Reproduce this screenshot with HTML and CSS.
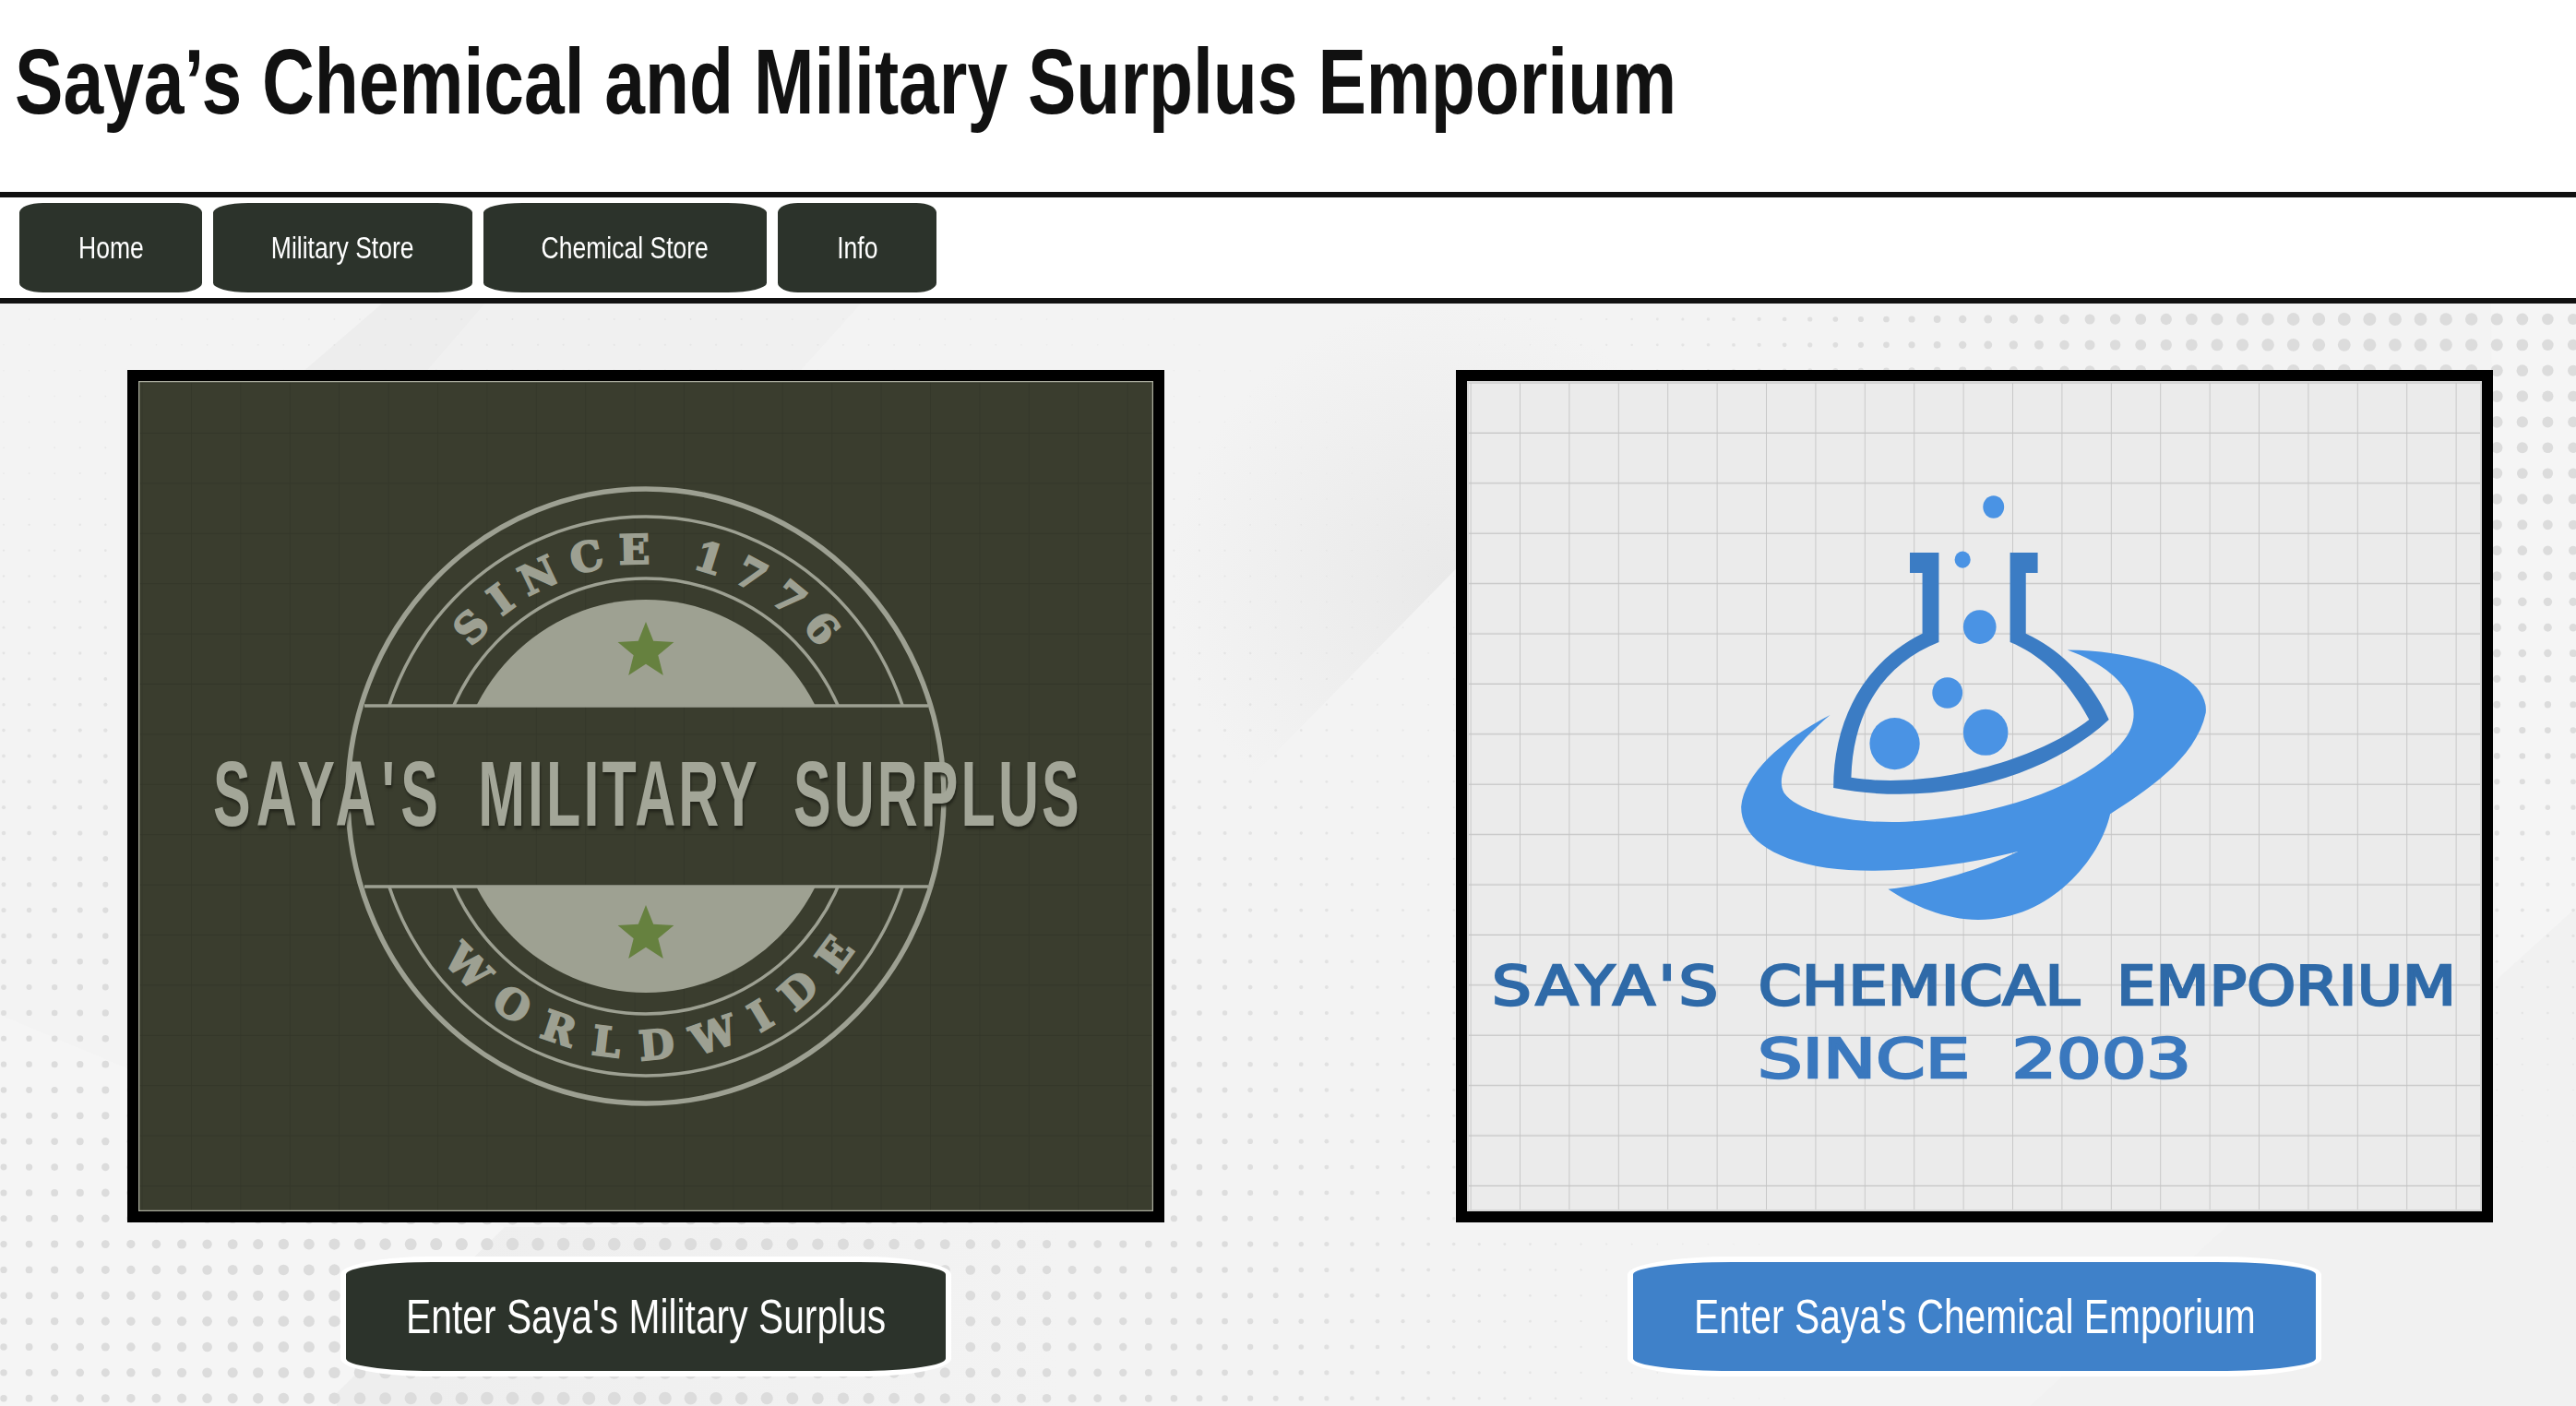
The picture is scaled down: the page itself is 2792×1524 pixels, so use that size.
FILE: index.html
```html
<!DOCTYPE html>
<html lang="en">
<head>
    <meta charset="UTF-8">
    <title>Saya's Chemical and Military Surplus Emporium</title>
    <link rel="stylesheet" href="styles.css">
</head>
<body>

    <header class="site-header">
        <h1 class="site-title">Saya’s Chemical and Military Surplus Emporium</h1>
    </header>

    <nav class="main-nav">
        <a href="#" class="nav-link nav-home"><span>Home</span></a>
        <a href="#" class="nav-link nav-military"><span>Military Store</span></a>
        <a href="#" class="nav-link nav-chemical"><span>Chemical Store</span></a>
        <a href="#" class="nav-link nav-info"><span>Info</span></a>
    </nav>

    <main class="stores">
        <!-- Page backdrop: soft diagonal bands, dots get added by dots.js -->
        <svg id="backdrop" class="backdrop" viewBox="0 329 2792 1195" aria-hidden="true">
            <defs>
                <radialGradient id="foldShade" cx="1570" cy="630" r="300" gradientUnits="userSpaceOnUse">
                    <stop offset="0" stop-color="#e9e9e9"/>
                    <stop offset="1" stop-color="#f3f3f3"/>
                </radialGradient>
                <linearGradient id="lowShade" x1="450" y1="1420" x2="1150" y2="1420" gradientUnits="userSpaceOnUse">
                    <stop offset="0" stop-color="#eeeeee"/>
                    <stop offset="1" stop-color="#f3f3f3"/>
                </linearGradient>
            </defs>
            <rect x="0" y="329" width="2792" height="1195" fill="#f3f3f3"/>
            <polygon points="0,1100 547,1330 365,1510 365,1524 0,1524" fill="#f5f5f5"/>
            <polygon points="414,329 526,329 456,410 320,410" fill="#ededed"/>
            <polygon points="526,329 933,329 860,410 456,410" fill="#f0f0f0"/>
            <polygon points="933,329 1860,329 1262,939 1000,700" fill="url(#foldShade)"/>
            <polygon points="547,1330 1150,1330 1150,1524 365,1524 365,1510" fill="url(#lowShade)"/>
            <polygon points="2792,984 2792,1524 2200,1524 2707,1061" fill="#f1f1f1"/>
            <polygon points="2792,329 2792,984 2707,1061 2700,329" fill="#f5f5f5"/>
        </svg>

        <section class="store">
            <div class="logo-frame">
                <svg class="logo" viewBox="0 0 1100 900" role="img" aria-label="Saya's Military Surplus logo">
                    <defs>
                        <pattern id="gridDark" x="4.6" y="2.6" width="53.4" height="54.4" patternUnits="userSpaceOnUse">
                            <path d="M53.4 0V54.4" fill="none" stroke="#2f3226" stroke-width="1.5"/>
                            <path d="M0 54.4H53.4" fill="none" stroke="#2f3226" stroke-width="2"/>
                        </pattern>
                        <clipPath id="outsideBand">
                            <rect x="0" y="0" width="1100" height="352"/>
                            <rect x="0" y="548" width="1100" height="352"/>
                        </clipPath>
                        <path id="arcSince" d="M305 450 A245 252 0 0 1 795 450"/>
                        <path id="arcWorld" d="M270 450 A280 285 0 0 0 830 450"/>
                    </defs>
                    <rect width="1100" height="900" fill="#3a3d2e"/>
                    <rect width="1100" height="900" fill="url(#gridDark)" opacity="0.6"/>

                    <g clip-path="url(#outsideBand)">
                        <ellipse cx="550" cy="450" rx="294" ry="303" class="ring-thin"/>
                        <ellipse cx="550" cy="450" rx="229" ry="236" class="ring-thin"/>
                        <ellipse cx="550" cy="450" rx="207" ry="213" fill="#9ea192"/>
                    </g>
                    <path d="M245 352H856M245 548H856" class="ring-thin"/>
                    <ellipse cx="550" cy="450" rx="323" ry="333" class="ring-thick"/>

                    <polygon transform="translate(550 293)" class="star" points="0,-32 8.2,-11.3 30.4,-9.9 13.3,4.3 18.8,25.9 0,13.8 -18.8,25.9 -13.3,4.3 -30.4,-9.9 -8.2,-11.3"/>
                    <polygon transform="translate(550 600)" class="star" points="0,-32 8.2,-11.3 30.4,-9.9 13.3,4.3 18.8,25.9 0,13.8 -18.8,25.9 -13.3,4.3 -30.4,-9.9 -8.2,-11.3"/>

                    <text class="badge-arc"><textPath href="#arcSince" startOffset="51%" text-anchor="middle">SINCE 1776</textPath></text>
                    <text class="badge-arc badge-arc-low"><textPath href="#arcWorld" startOffset="52%" text-anchor="middle">WORLDWIDE</textPath></text>

                    <text class="badge-name" transform="translate(81 482) scale(1.0165 1.6667)"><tspan class="name-first">SAYA'S</tspan> MILITARY SURPLUS</text>

                    <rect x="0.5" y="0.5" width="1099" height="899" fill="none" stroke="#a9ab9c" stroke-width="1.5"/>
                </svg>
            </div>
            <a href="#" class="enter-btn enter-military"><span>Enter Saya's Military Surplus</span></a>
        </section>

        <section class="store">
            <div class="logo-frame">
                <svg class="logo" viewBox="0 0 1100 900" role="img" aria-label="Saya's Chemical Emporium logo">
                    <defs>
                        <pattern id="gridLight" x="4.6" y="2.6" width="53.4" height="54.4" patternUnits="userSpaceOnUse">
                            <path d="M53.4 0V54.4" fill="none" stroke="#c8c8c8" stroke-width="2"/>
                            <path d="M0 54.4H53.4" fill="none" stroke="#c4c4c4" stroke-width="2.5"/>
                        </pattern>
                    </defs>
                    <rect width="1100" height="900" fill="#ebebeb"/>
                    <rect width="1100" height="900" fill="url(#gridLight)"/>

                    <g transform="matrix(0.7143 0 0 0.5102 -10 -13)">
                        <path fill="#4792e3" d="M925 597 C1060 600 1140 660 1135 730 C1120 830 1040 900 990 945 C975 1040 900 1170 790 1170 C740 1170 690 1140 653 1105 C720 1095 800 1060 850 1025 C750 1060 640 1075 560 1060 C470 1040 430 990 430 930 C435 860 490 790 565 735 C510 800 480 860 495 900 C520 950 620 970 700 960 C830 945 960 880 1010 790 C1050 720 1010 640 925 597Z"/>
                        <path fill="#3b7cc4" d="M686 390H730V580C650 625 600 720 597 868C720 895 880 830 958 745C930 670 890 610 838 580V390H880V433H862V562C920 600 965 670 988 745C900 860 740 935 570 890C570 740 620 620 705 562V433H686Z"/>
                        <g fill="#4a93e4">
                            <ellipse cx="813" cy="293" rx="16" ry="24"/>
                            <ellipse cx="766" cy="405" rx="12" ry="18"/>
                            <ellipse cx="792" cy="548" rx="25" ry="36"/>
                            <ellipse cx="743" cy="688" rx="23" ry="33"/>
                            <ellipse cx="801" cy="772" rx="34" ry="49"/>
                            <ellipse cx="663" cy="796" rx="38" ry="55"/>
                        </g>
                    </g>

                    <text class="chem-name" x="27" y="676" textLength="1045" lengthAdjust="spacingAndGlyphs"><tspan class="chem-first">SAYA'S</tspan> CHEMICAL EMPORIUM</text>
                    <text class="chem-name chem-since" x="315" y="755" textLength="470" lengthAdjust="spacingAndGlyphs">SINCE 2003</text>

                    <rect x="1" y="1" width="1098" height="898" fill="none" stroke="#d6d6d6" stroke-width="2"/>
                </svg>
            </div>
            <a href="#" class="enter-btn enter-chemical"><span>Enter Saya's Chemical Emporium</span></a>
        </section>
    </main>

    <script src="dots.js"></script>
</body>
</html>
```

FILE: styles.css
```css
/* General styles for body */
body {
    margin: 0;
    font-family: "Liberation Sans", Arial, sans-serif;
    background-color: #fff;
    color: #111;
}

/* Title bar */
.site-header {
    height: 208px;
    box-sizing: border-box;
    padding: 31px 0 0 16px;
}

.site-title {
    margin: 0;
    font-size: 100px;
    font-weight: bold;
    white-space: nowrap;
    transform: scaleX(0.786);
    transform-origin: left center;
}

/* Navigation row */
.main-nav {
    display: flex;
    height: 109px;
    padding-left: 15px;
    border-top: 6px solid #111;
    border-bottom: 6px solid #111;
}

.nav-link {
    display: flex;
    justify-content: center;
    align-items: center;
    box-sizing: border-box;
    background-color: #2c332b;
    border: 6px solid #fff;
    border-radius: 15%;
    color: #fff;
    font-size: 34px;
    text-decoration: none;
    white-space: nowrap;
}

.nav-link span {
    display: inline-block;
    transform: scaleX(0.78);
}

.nav-home { width: 210px; }
.nav-military { width: 293px; }
.nav-chemical { width: 319px; }
.nav-info { width: 184px; }

/* Store columns */
.stores {
    position: relative;
    display: flex;
    gap: 316px;
    height: 1195px;
    box-sizing: border-box;
    padding: 72px 0 0 138px;
    overflow: hidden;
}

.backdrop {
    position: absolute;
    top: 0;
    left: 0;
    width: 2792px;
    height: 1195px;
}

.store {
    position: relative;
    display: flex;
    flex-direction: column;
    align-items: center;
    gap: 37px;
}

.logo-frame {
    border: 12px solid #000;
}

.logo {
    display: block;
    width: 1100px;
    height: 900px;
}

/* Military badge */
.ring-thin {
    fill: none;
    stroke: #9da092;
    stroke-width: 3.5;
}

.ring-thick {
    fill: none;
    stroke: #9da092;
    stroke-width: 5.5;
}

.star {
    fill: #66813f;
}

.badge-arc {
    font-family: "DejaVu Serif", serif;
    font-size: 44px;
    font-weight: bold;
    letter-spacing: 15px;
    fill: #9da092;
    stroke: #9da092;
    stroke-width: 2;
}

.badge-arc-low {
    letter-spacing: 23px;
}

.badge-name {
    font-family: "Liberation Sans", Arial, sans-serif;
    font-size: 60px;
    font-weight: bold;
    letter-spacing: 3px;
    word-spacing: 17px;
    fill: #a3a698;
    filter: drop-shadow(1px 2px 1px #23251b);
}

.name-first {
    letter-spacing: 6px;
}

/* Chemical logo text */
.chem-name {
    font-family: "DejaVu Sans", sans-serif;
    font-size: 58px;
    word-spacing: 16px;
    fill: #2f6aa8;
    stroke: #2f6aa8;
    stroke-width: 2.5;
}

.chem-first {
    letter-spacing: 3px;
}

.chem-since {
    fill: #3a78be;
    stroke: #3a78be;
}

/* Enter buttons */
.enter-btn {
    display: flex;
    justify-content: center;
    align-items: center;
    box-sizing: border-box;
    height: 130px;
    border: 6px solid #fff;
    border-radius: 15%;
    color: #fff;
    font-size: 51px;
    text-decoration: none;
    white-space: nowrap;
}

.enter-btn span {
    display: inline-block;
    transform: scaleX(0.8);
}

.enter-military {
    width: 662px;
    background-color: #2c332b;
}

.enter-chemical {
    width: 752px;
    background-color: #3f81c9;
}
```

FILE: dots.js
```js
// Halftone dots for the page backdrop. Two soft clusters: top right and bottom left.
const backdrop = document.getElementById("backdrop");
const svgNS = "http://www.w3.org/2000/svg";

function dotSize(x, y) {
    const topRight = 14 * Math.exp(-(((x - 2560) ** 2 + (y - 330) ** 2) / (600 * 600)));
    const bottomLeft = 14 * Math.exp(-(((x - 640) ** 2 + (y - 1480) ** 2) / (800 * 800)));
    return Math.max(topRight, bottomLeft);
}

for (let row = 0; row < 43; row++) {
    for (let col = 0; col < 102; col++) {
        const x = 4 + col * 27.574;
        const y = 346 + row * 27.85;
        const size = dotSize(x, y);
        if (size < 1) continue;

        const dot = document.createElementNS(svgNS, "circle");
        dot.setAttribute("cx", x);
        dot.setAttribute("cy", y);
        dot.setAttribute("r", size / 2);
        dot.setAttribute("fill", "#dcdcdc");
        dot.setAttribute("opacity", Math.min(1, 0.35 + size / 10));
        backdrop.appendChild(dot);
    }
}
```
